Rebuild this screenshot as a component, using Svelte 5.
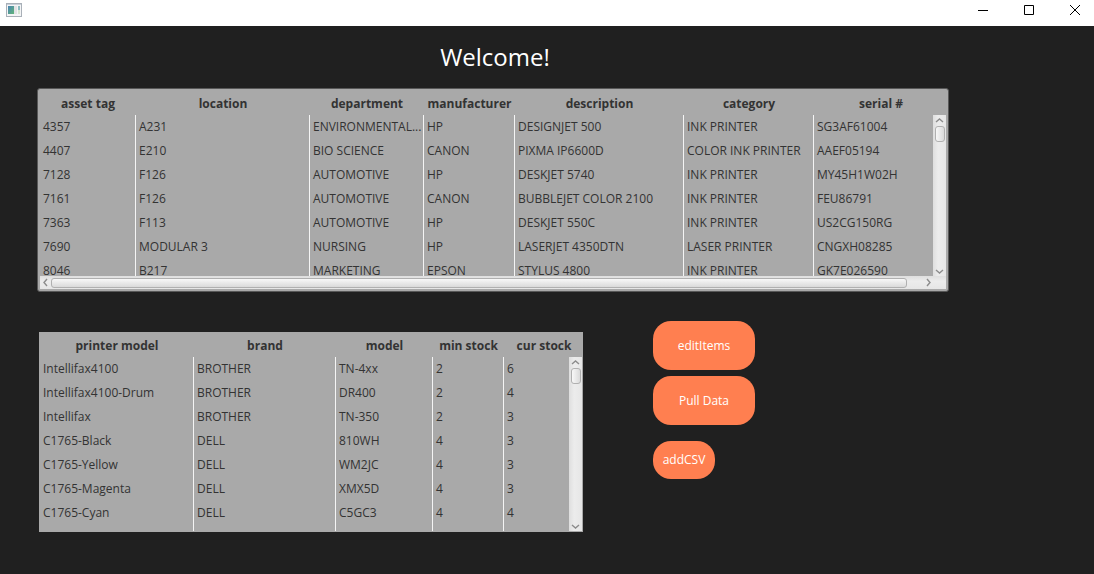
<script>
  const assets = {
    label: 'Assets',
    columns: [
      ['asset tag', 96], ['location', 174], ['department', 114], ['manufacturer', 91],
      ['description', 169], ['category', 130], ['serial #', null]
    ],
    rows: [
      ['4357', 'A231', 'ENVIRONMENTAL...', 'HP', 'DESIGNJET 500', 'INK PRINTER', 'SG3AF61004'],
      ['4407', 'E210', 'BIO SCIENCE', 'CANON', 'PIXMA IP6600D', 'COLOR INK PRINTER', 'AAEF05194'],
      ['7128', 'F126', 'AUTOMOTIVE', 'HP', 'DESKJET 5740', 'INK PRINTER', 'MY45H1W02H'],
      ['7161', 'F126', 'AUTOMOTIVE', 'CANON', 'BUBBLEJET COLOR 2100', 'INK PRINTER', 'FEU86791'],
      ['7363', 'F113', 'AUTOMOTIVE', 'HP', 'DESKJET 550C', 'INK PRINTER', 'US2CG150RG'],
      ['7690', 'MODULAR 3', 'NURSING', 'HP', 'LASERJET 4350DTN', 'LASER PRINTER', 'CNGXH08285'],
      ['8046', 'B217', 'MARKETING', 'EPSON', 'STYLUS 4800', 'INK PRINTER', 'GK7E026590']
    ]
  };
  const stock = {
    label: 'Stock',
    columns: [['printer model', 154], ['brand', 142], ['model', 97], ['min stock', 71], ['cur stock', null]],
    rows: [
      ['Intellifax4100', 'BROTHER', 'TN-4xx', '2', '6'],
      ['Intellifax4100-Drum', 'BROTHER', 'DR400', '2', '4'],
      ['Intellifax', 'BROTHER', 'TN-350', '2', '3'],
      ['C1765-Black', 'DELL', '810WH', '4', '3'],
      ['C1765-Yellow', 'DELL', 'WM2JC', '4', '3'],
      ['C1765-Magenta', 'DELL', 'XMX5D', '4', '3'],
      ['C1765-Cyan', 'DELL', 'C5GC3', '4', '4']
    ]
  };
</script>

{#snippet arrow(d, label)}
  <button class="arrow" aria-label={label}>
    <svg width="9" height="9" viewBox="0 0 9 9"><path {d} /></svg>
  </button>
{/snippet}

{#snippet grid(data)}
  <div class="viewport">
    <table aria-label={data.label}>
      <colgroup>
        {#each data.columns as [, width]}
          <col style:width={width ? `${width}px` : 'auto'} />
        {/each}
      </colgroup>
      <thead>
        <tr>{#each data.columns as [name]}<th scope="col">{name}</th>{/each}</tr>
      </thead>
      <tbody>
        {#each data.rows as row}
          <tr>{#each row as cell}<td>{cell}</td>{/each}</tr>
        {/each}
        <tr>{#each data.columns as _}<td></td>{/each}</tr>
      </tbody>
    </table>
  </div>
  <div class="vbar">
    {@render arrow('M1 6 L4.5 3 L8 6', 'Scroll up')}
    <div class="thumb"></div>
    {@render arrow('M1 3 L4.5 6 L8 3', 'Scroll down')}
  </div>
{/snippet}

<header class="titlebar">
  <svg class="appicon" width="16" height="14" viewBox="0 0 16 14">
    <defs>
      <linearGradient id="pane" x1="0" y1="0" x2="1" y2="1">
        <stop offset="0" stop-color="#4a83b4" />
        <stop offset="1" stop-color="#62b678" />
      </linearGradient>
    </defs>
    <rect x="0.5" y="0.5" width="15" height="13" fill="#f4f5f6" stroke="#a9b0b8" />
    <path d="M1 1.5H15" stroke="#c9d0d9" />
    <rect x="2" y="3" width="6" height="8" fill="url(#pane)" />
    <rect x="8" y="3" width="3" height="8" fill="#e2e3e5" />
    <rect x="12" y="3" width="2" height="4" fill="#8dbcc0" />
    <rect x="12" y="7" width="2" height="4" fill="#d5e6d2" />
  </svg>
  <div class="controls">
    <button aria-label="Minimize"><svg width="10" height="10" viewBox="0 0 10 10"><path d="M0 5.5H10" /></svg></button>
    <button aria-label="Maximize"><svg width="10" height="10" viewBox="0 0 10 10"><path d="M0.5 0.5H9.5V9.5H0.5Z" /></svg></button>
    <button aria-label="Close"><svg width="10" height="10" viewBox="0 0 10 10"><path d="M0 0L10 10M10 0L0 10" /></svg></button>
  </div>
</header>

<main>
  <h1>Welcome!</h1>
  <section class="panel focused">
    {@render grid(assets)}
    <div class="hbar">
      {@render arrow('M6 1 L3 4.5 L6 8', 'Scroll left')}
      <div class="thumb"></div>
      {@render arrow('M3 1 L6 4.5 L3 8', 'Scroll right')}
    </div>
  </section>
  <div class="lower">
    <section class="panel plain">
      {@render grid(stock)}
    </section>
    <div class="actions">
      <button class="large">editItems</button>
      <button class="large">Pull Data</button>
      <button class="small">addCSV</button>
    </div>
  </div>
</main>

<style>
  :global(body) {
    margin: 0;
    background: #202020;
    font: 12px/16px "Segoe UI", "Open Sans", sans-serif;
  }
  button {
    border: 0;
    padding: 0;
    background: none;
    font: inherit;
  }
  .titlebar {
    display: flex;
    justify-content: space-between;
    height: 26px;
    background: #fff;
  }
  .appicon { margin: 3px 0 0 6px; }
  .controls {
    display: flex;
    gap: 36px;
    height: 20px;
    padding-right: 14px;
  }
  .controls button {
    display: grid;
    place-items: center;
  }
  .controls svg { fill: none; stroke: #000; stroke-width: 1; }
  main { padding: 14px 145px 42px 37px; }
  h1 {
    margin: 0 0 14px;
    padding-left: 4px;
    color: #fff;
    font-size: 24px;
    font-weight: 400;
    line-height: 34px;
    text-align: center;
  }
  .panel {
    display: grid;
    grid-template-columns: minmax(0, 1fr) 13px;
    background: #a9a9a9;
    color: #333;
  }
  .focused {
    grid-template-rows: 24px 161px 13px;
    padding: 2px;
    border: 1px solid #585858;
    border-radius: 3px;
  }
  .plain {
    grid-template-rows: 24px 174px;
    padding: 1px;
  }
  .viewport {
    grid-area: 1 / 1 / 3 / 3;
    overflow: hidden;
  }
  table {
    width: calc(100% + 2px);
    table-layout: fixed;
    border-collapse: separate;
    border-spacing: 0;
  }
  th, td {
    box-sizing: border-box;
    height: 24px;
    padding: 0 0 0 3px;
    overflow: hidden;
    white-space: nowrap;
    text-overflow: ellipsis;
  }
  th {
    padding: 2px 0 0;
    font-weight: 700;
    text-align: center;
  }
  td { border-right: 1px solid #f4f4f4; text-align: left; }
  td:last-child { border-right: 0; }
  .vbar, .hbar {
    display: flex;
    align-items: center;
    background: linear-gradient(90deg, #dedede, #ececec 40%, #e6e6e6);
  }
  .vbar {
    grid-area: 2 / 2;
    z-index: 1;
    flex-direction: column;
  }
  .hbar {
    grid-area: 3 / 1 / 4 / 3;
    padding-right: 13px;
    background: linear-gradient(#dedede, #ececec 40%, #e6e6e6);
  }
  .arrow {
    display: grid;
    place-items: center;
    flex: none;
    width: 10px;
    height: 10px;
  }
  .arrow svg { fill: none; stroke: #8c8c8c; stroke-width: 1.4; }
  .thumb {
    box-sizing: border-box;
    border: 1px solid #b0b0b0;
    border-radius: 3px;
    background: linear-gradient(90deg, #f8f8f8, #dadada);
  }
  .vbar .thumb {
    width: 10px;
    height: 16px;
    margin: 1px 0 auto;
  }
  .hbar .thumb {
    flex: 1;
    height: 10px;
    margin: 0 16px 0 1px;
    background: linear-gradient(#f8f8f8, #dadada);
  }
  .lower {
    display: grid;
    grid-template-columns: minmax(0, 1fr) 296px;
    gap: 70px;
    margin-top: 29px;
    padding-left: 2px;
  }
  .plain { margin-top: 11px; }
  .actions {
    display: flex;
    flex-direction: column;
    align-items: flex-start;
  }
  .actions button {
    background: #ff7f50;
    color: #fff;
    border-radius: 18px;
  }
  .actions .large {
    width: 102px;
    height: 49px;
    margin-bottom: 6px;
  }
  .actions .small {
    width: 62px;
    height: 38px;
    margin-top: 10px;
  }
</style>
